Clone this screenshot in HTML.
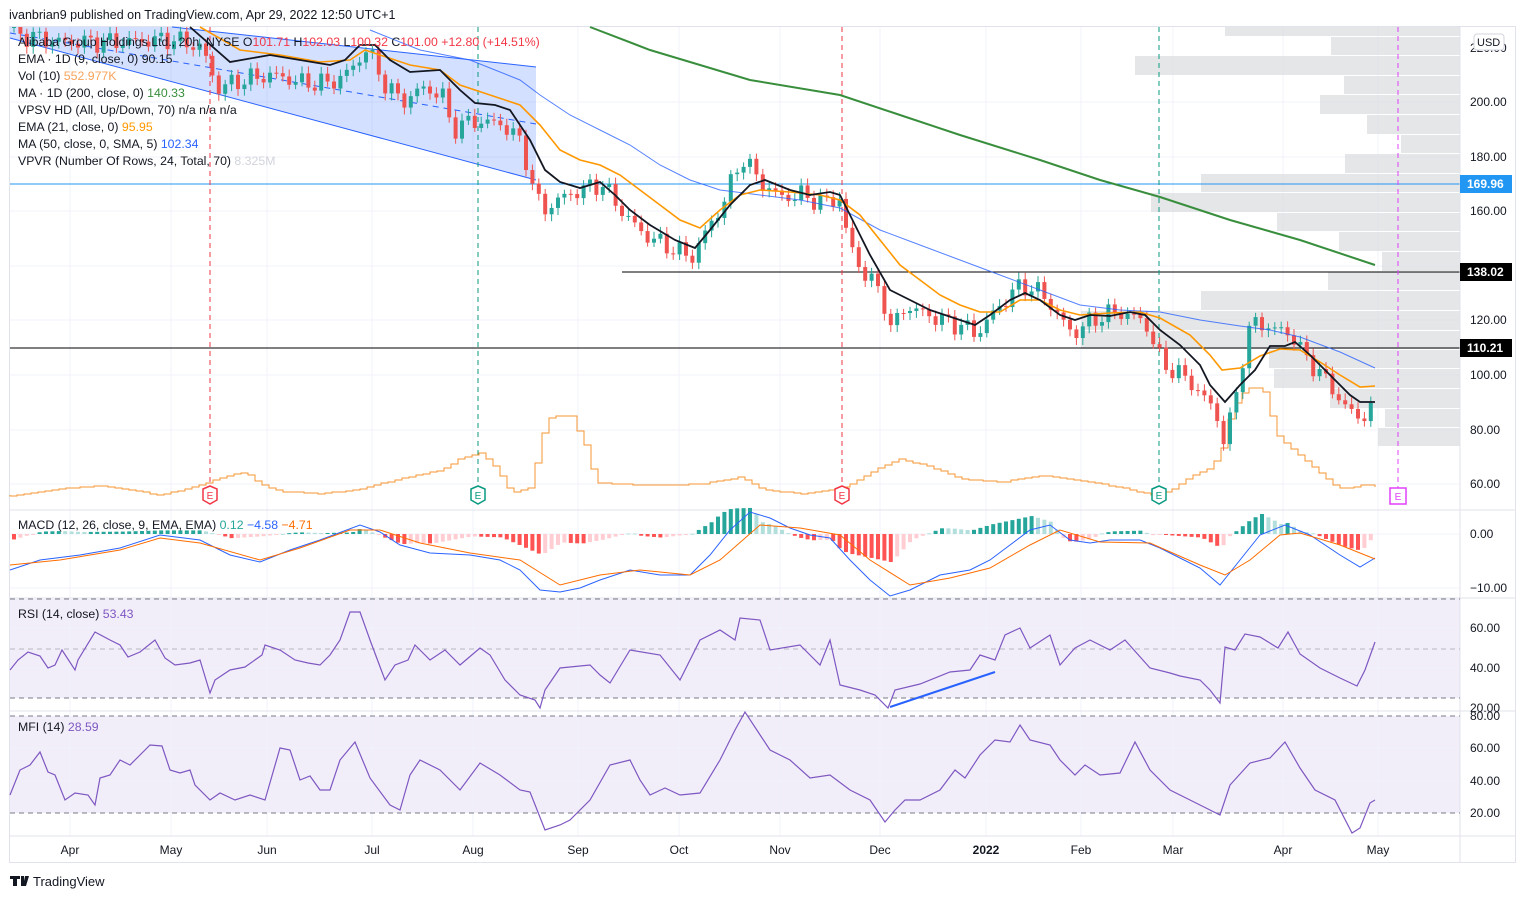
<!DOCTYPE html>
<html><head><meta charset="utf-8"><style>
body{margin:0;background:#fff;width:1526px;height:899px;overflow:hidden;font-family:"Liberation Sans",sans-serif}
svg{position:absolute;left:0;top:0}
text{font-family:"Liberation Sans",sans-serif}
</style></head><body>
<svg id="s" width="1526" height="899" xmlns="http://www.w3.org/2000/svg">
<text x="9" y="19" font-size="12.5" fill="#131722">ivanbrian9 published on TradingView.com, Apr 29, 2022 12:50 UTC+1</text>
<g id="g"></g>
</svg>
<script>
const g=document.getElementById('g');let h='';
function P(a){return a.map(p=>p.join(',')).join(' ')}
function interp(pts,x){for(let i=0;i<pts.length-1;i++){if(x>=pts[i][0]&&x<=pts[i+1][0]){const t=(x-pts[i][0])/(pts[i+1][0]-pts[i][0]||1);return pts[i][1]+t*(pts[i+1][1]-pts[i][1]);}}return x<pts[0][0]?pts[0][1]:pts[pts.length-1][1];}
const months=[[70,'Apr'],[171,'May'],[267,'Jun'],[372,'Jul'],[473,'Aug'],[578,'Sep'],[679,'Oct'],[780,'Nov'],[880,'Dec'],[986,'2022'],[1081,'Feb'],[1173,'Mar'],[1283,'Apr'],[1378,'May']];
h+=`<rect x="9.5" y="26.5" width="1506" height="836" fill="#fff" stroke="#e0e3eb"/>`;
h+=`<rect x="10" y="599" width="1450" height="99" fill="#7e57c2" fill-opacity="0.1"/>`;
h+=`<rect x="10" y="716" width="1450" height="97" fill="#7e57c2" fill-opacity="0.1"/>`;
months.forEach(m=>{h+=`<line x1="${m[0]}" y1="27" x2="${m[0]}" y2="836" stroke="#f0f3fa"/>`});
[102,157,211,266,320,375,430,484].forEach(y=>h+=`<line x1="10" y1="${y}" x2="1460" y2="${y}" stroke="#f0f3fa"/>`);
[534,588,628,668,748,781].forEach(y=>h+=`<line x1="10" y1="${y}" x2="1460" y2="${y}" stroke="#f0f3fa"/>`);
const vp=[[27,36,1225],[37,55,1331],[56,75,1135],[76,94,1344],[95,114,1320],[115,134,1367],[135,153,1401],[154,173,1345],[174,192,1201],[193,212,1151],[213,231,1277],[232,251,1339],[252,271,1382],[272,290,1328],[291,310,1201],[311,330,1081],[331,349,1081],[350,368,1269],[369,388,1274],[389,408,1330],[409,427,1385],[428,446,1378]];
vp.forEach(r=>h+=`<rect x="${r[2]}" y="${r[0]}" width="${1460-r[2]}" height="${r[1]-r[0]}" fill="#dcdde0" fill-opacity="0.75"/>`);
h+=`<polygon points="10,27 172,27 536,67 536,180 10,38" fill="#2962ff" fill-opacity="0.2"/>`;
h+=`<line x1="172" y1="27" x2="536" y2="67" stroke="#2962ff"/><line x1="10" y1="38" x2="536" y2="180" stroke="#2962ff"/>`;
h+=`<line x1="10" y1="33" x2="536" y2="124" stroke="#2962ff" stroke-dasharray="6,5"/>`;
h+=`<line x1="10" y1="184" x2="1460" y2="184" stroke="#2196f3"/>`;
h+=`<line x1="622" y1="272" x2="1460" y2="272" stroke="#000"/>`;
h+=`<line x1="10" y1="348" x2="1460" y2="348" stroke="#000"/>`;
[[210,'#f23645'],[842,'#f23645'],[478,'#089981'],[1159,'#089981'],[1398,'#e040fb']].forEach(v=>{h+=`<line x1="${v[0]}" y1="27" x2="${v[0]}" y2="500" stroke="${v[1]}" stroke-dasharray="5,4"/>`;});
const vol=[[10,495],[60,488],[100,485],[130,490],[160,495],[200,485],[230,475],[245,473],[260,485],[280,492],[320,495],[360,490],[400,480],[440,472],[460,460],[480,455],[495,470],[510,495],[530,490],[540,440],[550,418],[570,418],[585,450],[595,485],[640,488],[700,487],[740,480],[760,492],[800,497],[840,492],[880,470],[900,462],[930,470],[960,482],[1000,485],[1040,478],[1080,483],[1120,490],[1150,497],[1170,493],[1190,478],[1210,470],[1222,448],[1230,412],[1245,390],[1262,390],[1275,435],[1290,450],[1305,462],[1320,475],[1335,488],[1345,490],[1365,485],[1375,488]];
let vd='M10,495';for(let x=10;x<=1375;x+=7){const y=Math.round(interp(vol,x)+3*Math.sin(x*0.9));vd+=` H${x} V${y}`;}
h+=`<path d="${vd}" fill="none" stroke="#f57c00" stroke-opacity="0.8" stroke-width="1"/>`;
const cp=[[10,225],[60,222],[120,222],[170,223],[200,220],[215,205],[240,208],[270,210],[300,207],[330,207],[350,212],[365,220],[380,208],[400,200],[420,205],[440,203],[450,190],[470,193],[500,192],[520,185],[530,170],[540,160],[560,165],[580,168],[600,170],[620,160],[640,152],[660,148],[690,143],[700,150],[720,162],[740,180],[760,170],[780,165],[800,166],[820,163],[840,165],[845,150],[860,138],[880,130],[890,115],[900,125],[920,123],[940,120],[960,118],[975,115],[990,122],[1010,130],[1020,133],[1040,130],[1050,125],[1070,115],[1090,120],[1110,123],[1130,122],[1145,118],[1160,104],[1180,100],[1200,93],[1215,85],[1222,76],[1230,85],[1240,105],[1250,120],[1270,117],[1290,115],[1300,108],[1320,100],[1340,90],[1355,84],[1370,88],[1375,101]];
const py=p=>102+(200-p)*2.73;
let prev=null;
for(let x=12;x<=1374;x+=6.4){let p=interp(cp,x)+2.5*Math.sin(x*1.7)+1.5*Math.cos(x*0.63);if(prev===null)prev=p;const o=prev,c=p;const up=c>=o;const col=up?'#26a69a':'#ef5350';const yt=py(Math.max(o,c)),yb=py(Math.min(o,c));const hi=yt-4-3*Math.abs(Math.sin(x)),lo=yb+4+3*Math.abs(Math.cos(x));if(yb>26){h+=`<line x1="${x+2}" y1="${Math.max(27,hi)}" x2="${x+2}" y2="${lo}" stroke="${col}"/><rect x="${x}" y="${Math.max(27,yt)}" width="4" height="${Math.max(1,yb-Math.max(27,yt))}" fill="${col}"/>`;}prev=p;}
const e9=[[190,27],[230,62],[270,55],[300,60],[330,65],[345,60],[360,45],[375,45],[390,60],[410,72],[440,70],[460,90],[475,103],[495,105],[510,110],[530,140],[545,170],[560,182],[580,188],[600,182],[615,195],[630,210],[650,225],[675,240],[695,248],[710,230],[730,205],[750,185],[765,180],[790,190],[810,195],[830,192],[840,195],[855,225],[870,255],[890,290],[910,300],[930,310],[960,320],[975,325],[990,315],[1010,300],[1025,293],[1040,300],[1060,315],[1075,320],[1090,315],[1110,316],[1130,312],[1145,315],[1160,330],[1180,345],[1200,365],[1210,385],[1225,402],[1240,385],[1255,370],[1270,346],[1285,346],[1295,342],[1310,355],[1330,375],[1350,395],[1360,402],[1375,402]];
const e21=[[200,27],[240,50],[280,55],[320,62],[350,60],[365,50],[380,55],[410,65],[440,70],[460,85],[490,95],[520,105],[540,125],[560,150],[580,160],[600,165],[620,175],[640,190],[660,205],[680,220],[700,228],[720,210],[740,195],[760,190],[790,192],[820,195],[840,200],[860,215],[880,240],[900,265],[920,280],[940,295],[960,305],[980,312],[1000,312],[1020,300],[1040,300],[1060,310],[1080,315],[1110,313],[1140,312],[1160,318],[1190,335],[1210,355],[1222,370],[1240,368],[1260,356],[1280,349],[1300,350],[1320,362],[1340,375],[1360,387],[1375,386]];
const m50=[[370,30],[420,50],[470,60],[520,80],[540,95],[570,115],[600,130],[630,145],[660,165],[690,180],[720,190],[760,195],[800,200],[840,208],[880,230],[920,245],[960,260],[1000,275],[1040,290],[1080,305],[1120,310],[1160,312],[1200,320],[1240,326],[1270,330],[1300,337],[1340,352],[1375,368]];
const m200=[[590,27],[650,50],[750,80],[840,95],[900,115],[960,135],[1040,160],[1100,180],[1160,197],[1230,220],[1300,240],[1375,265]];
h+=`<polyline points="${P(m50)}" fill="none" stroke="#2962ff" stroke-opacity=".8"/>`;
h+=`<polyline points="${P(m200)}" fill="none" stroke="#388e3c" stroke-width="2"/>`;
h+=`<polyline points="${P(e21)}" fill="none" stroke="#ff9800" stroke-width="1.6"/>`;
h+=`<polyline points="${P(e9)}" fill="none" stroke="#131722" stroke-width="1.8"/>`;
[[210,'#f23645'],[842,'#f23645'],[478,'#089981'],[1159,'#089981']].forEach(e=>{h+=`<polygon points="${e[0]-7},489 ${e[0]},486 ${e[0]+7},489 ${e[0]+7},500 ${e[0]},504 ${e[0]-7},500" fill="#fff" stroke="${e[1]}" stroke-width="1.5"/><text x="${e[0]}" y="499" font-size="10" fill="${e[1]}" text-anchor="middle">E</text>`});
h+=`<rect x="1390" y="488" width="16" height="16" fill="#fff" stroke="#e040fb" stroke-width="1.5"/><text x="1398" y="500" font-size="10" fill="#e040fb" text-anchor="middle">E</text>`;
[510,598,711,836].forEach(y=>h+=`<line x1="10" y1="${y}" x2="1516" y2="${y}" stroke="#e0e3eb"/>`);
h+=`<line x1="1460" y1="27" x2="1460" y2="863" stroke="#e0e3eb"/>`;
const mac=[[10,570],[40,560],[80,555],[120,548],[160,535],[200,540],[230,555],[260,562],[290,550],[320,540],[360,525],[380,532],[400,545],[430,553],[470,555],[500,560],[520,570],[540,590],[560,592],[580,588],[600,580],[630,570],[660,575],[690,575],[710,555],[730,530],[750,512],[770,518],[790,528],[810,535],[830,538],[850,560],[870,580],[890,596],[910,590],[940,575],[970,570],[990,560],[1010,545],[1030,530],[1050,525],[1070,540],[1090,543],[1110,540],[1140,540],[1160,548],[1180,558],[1200,568],[1220,585],[1240,560],[1260,535],[1285,525],[1310,535],[1340,555],[1360,567],[1375,558]];
const sig=[[10,565],[60,560],[120,550],[160,538],[200,543],[260,560],[300,548],[350,530],[380,530],[420,543],[470,553],[520,560],[560,585],[600,575],[640,570],[690,575],[720,560],[760,525],[800,528],[840,535],[870,560],[910,585],[950,578],[990,568],[1030,545],[1060,530],[1100,542],[1150,543],[1200,565],[1225,575],[1250,560],[1280,535],[1300,533],[1340,545],[1375,559]];
let ph=0;
for(let x=12;x<=1374;x+=6.4){const d=(interp(sig,x)-interp(mac,x))*1.2;const grow=Math.abs(d)>=Math.abs(ph);let col=d>=0?(grow?'#26a69a':'#b2dfdb'):(grow?'#ff5252':'#ffcdd2');const y=d>=0?534-d:534;h+=`<rect x="${x}" y="${y}" width="4" height="${Math.max(1,Math.abs(d))}" fill="${col}"/>`;ph=d;}
h+=`<polyline points="${P(mac)}" fill="none" stroke="#2962ff"/><polyline points="${P(sig)}" fill="none" stroke="#ff6d00"/>`;
[599,649,698].forEach((y,i)=>h+=`<line x1="10" y1="${y}" x2="1460" y2="${y}" stroke="#787b86" stroke-dasharray="5,4" stroke-opacity="${i==1?0.5:1}"/>`);
const rsi=[[10,670],[18,660],[28,652],[40,656],[48,668],[55,665],[62,650],[75,670],[78,660],[95,632],[110,640],[120,645],[128,657],[140,652],[155,640],[165,658],[175,665],[190,663],[200,660],[210,693],[215,680],[230,670],[245,667],[262,655],[265,645],[280,650],[295,660],[308,663],[320,665],[330,655],[340,640],[350,612],[360,612],[370,640],[385,680],[395,665],[408,660],[415,645],[430,660],[445,650],[460,665],[480,648],[490,655],[505,680],[520,695],[535,700],[540,708],[545,690],[560,668],[590,665],[600,675],[610,683],[630,650],[660,655],[680,680],[700,640],[720,630],[735,640],[740,618],[760,620],[770,650],[800,645],[820,665],[830,640],[840,685],[860,690],[875,695],[888,708],[895,690],[920,684],[950,672],[970,670],[980,655],[995,660],[1005,635],[1020,628],[1030,648],[1050,635],[1060,665],[1075,648],[1090,640],[1110,650],[1125,640],[1150,668],[1170,673],[1180,676],[1200,680],[1210,690],[1220,703],[1225,647],[1235,650],[1245,634],[1260,637],[1278,648],[1288,632],[1300,654],[1320,668],[1340,678],[1357,686],[1365,670],[1375,642]];
h+=`<polyline points="${P(rsi)}" fill="none" stroke="#7e57c2" stroke-width="1.2"/>`;
h+=`<line x1="890" y1="707" x2="995" y2="672" stroke="#2962ff" stroke-width="2"/>`;
[716,813].forEach(y=>h+=`<line x1="10" y1="${y}" x2="1460" y2="${y}" stroke="#787b86" stroke-dasharray="5,4"/>`);
const mfi=[[10,795],[20,770],[30,765],[40,752],[48,772],[55,775],[65,800],[75,793],[88,795],[95,805],[100,778],[110,775],[120,760],[130,765],[145,750],[150,745],[162,746],[170,770],[180,773],[190,770],[195,785],[210,800],[220,793],[235,800],[250,795],[265,800],[280,748],[290,750],[300,780],[310,776],[320,790],[330,790],[340,760],[355,742],[370,778],[390,805],[400,810],[410,775],[420,760],[440,770],[460,790],[480,763],[500,775],[520,790],[530,792],[545,830],[560,825],[570,820],[590,800],[610,765],[630,760],[640,780],[650,795],[665,788],[680,795],[700,793],[720,760],[735,730],[745,712],[770,750],[790,760],[810,778],[830,775],[850,790],[870,800],[885,822],[895,810],[905,800],[920,800],[940,790],[955,770],[965,778],[980,755],[995,740],[1010,742],[1020,725],[1030,740],[1050,745],[1060,760],[1075,775],[1085,765],[1100,775],[1120,773],[1135,742],[1150,770],[1170,790],[1190,800],[1210,810],[1220,815],[1230,785],[1250,763],[1270,758],[1285,742],[1300,768],[1315,790],[1335,800],[1352,833],[1360,828],[1370,803],[1375,800]];
h+=`<polyline points="${P(mfi)}" fill="none" stroke="#7e57c2" stroke-width="1.2"/>`;
const fs='font-size="12" fill="#131722"';
[[106,'200.00'],[161,'180.00'],[215,'160.00'],[324,'120.00'],[379,'100.00'],[434,'80.00'],[488,'60.00'],[538,'0.00'],[592,'−10.00'],[632,'60.00'],[672,'40.00'],[712,'20.00'],[720,'80.00'],[752,'60.00'],[785,'40.00'],[817,'20.00'],[52,'220.00']].forEach(l=>h+=`<text x="1470" y="${l[0]}" ${fs}>${l[1]}</text>`);
h+=`<rect x="1474" y="34" width="30" height="16" rx="3" fill="#fff" stroke="#d1d4dc"/><text x="1477" y="46" font-size="11" fill="#131722">USD</text>`;
[[184,'169.96','#2196f3'],[272,'138.02','#000'],[348,'110.21','#000']].forEach(l=>h+=`<rect x="1460" y="${l[0]-9}" width="52" height="18" fill="${l[2]}"/><text x="1467" y="${l[0]+4}" font-size="12" font-weight="bold" fill="#fff">${l[1]}</text>`);
months.forEach(m=>h+=`<text x="${m[0]}" y="854" font-size="12" fill="#131722" text-anchor="middle" ${m[1]=='2022'?'font-weight="bold"':''}>${m[1]}</text>`);
const L=(y,t)=>h+=`<text x="18" y="${y}" font-size="12.3" fill="#131722">${t}</text>`;
L(46,'Alibaba Group Holdings Ltd., 20h, NYSE <tspan fill="#131722">O</tspan><tspan fill="#f23645">101.71</tspan> H<tspan fill="#f23645">102.03</tspan> L<tspan fill="#f23645">100.32</tspan> C<tspan fill="#f23645">101.00  +12.80 (+14.51%)</tspan>');
L(63,'EMA · 1D (9, close, 0)  <tspan fill="#131722">90.15</tspan>');
L(80,'Vol (10)  <tspan fill="#f7a35c">552.977K</tspan>');
L(97,'MA · 1D (200, close, 0)  <tspan fill="#388e3c">140.33</tspan>');
L(114,'VPSV HD (All, Up/Down, 70)  n/a  n/a  n/a');
L(131,'EMA (21, close, 0)  <tspan fill="#ff9800">95.95</tspan>');
L(148,'MA (50, close, 0, SMA, 5)  <tspan fill="#2962ff">102.34</tspan>');
L(165,'VPVR (Number Of Rows, 24, Total, 70)  <tspan fill="#d1d4dc">8.325M</tspan>');
L(529,'MACD (12, 26, close, 9, EMA, EMA)  <tspan fill="#26a69a">0.12</tspan>  <tspan fill="#2962ff">−4.58</tspan>  <tspan fill="#ff6d00">−4.71</tspan>');
L(618,'RSI (14, close)  <tspan fill="#7e57c2">53.43</tspan>');
L(731,'MFI (14)  <tspan fill="#7e57c2">28.59</tspan>');
h+=`<path d="M10,876 h10 v3 h-3 v7 h-4 v-7 h-3z M21,876 h3 v10 h-3z M25,876 h4 l-3,10 h-3z" fill="#131722"/><text x="33" y="886" font-size="13" fill="#131722">TradingView</text>`;
g.innerHTML=h;
</script>
</body></html>
